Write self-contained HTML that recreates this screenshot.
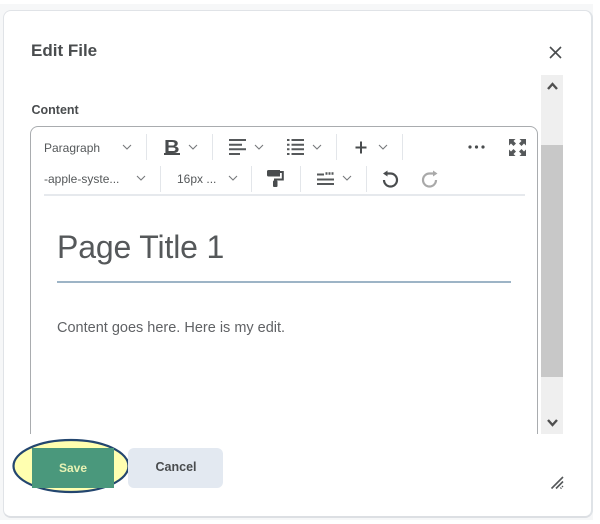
<!DOCTYPE html>
<html><head><meta charset="utf-8">
<style>
html,body{margin:0;padding:0;background:#fff}
#p{position:relative;width:600px;height:524px;overflow:hidden;background:#fff;font-family:"Liberation Sans",sans-serif;color:#494c4e;filter:blur(.3px)}
#p div,#p svg,#p span{position:absolute}
.t{white-space:nowrap;line-height:1}
.sep{width:1px;background:#e3e6ea}
svg{overflow:visible}
</style></head><body>
<div id="p">
<div style="left:0;top:4px;width:593px;height:516px;background:#f6f7f8"></div>
<div style="left:3px;top:10px;width:587px;height:505px;background:#fff;border:1px solid #e0e3e7;border-bottom:2px solid #dcdfe3;border-right:2px solid #dfe3e7;border-radius:8px"></div>

<div class="t" style="left:31px;top:42px;font-size:17px;font-weight:bold">Edit File</div>
<svg style="left:549px;top:46px" width="13" height="13"><path d="M1 1L12 12M12 1L1 12" stroke="#494c4e" stroke-width="1.600" fill="none"/></svg>

<div class="t" style="left:31.500px;top:104px;font-size:12.500px;font-weight:bold">Content</div>

<!-- scrollbar -->
<div style="left:541px;top:75px;width:22px;height:359px;background:#efefef"></div>
<div style="left:541px;top:145px;width:22px;height:232px;background:#c8c8c8"></div>
<svg style="left:547px;top:82px" width="11" height="8"><path d="M1 7L5.500 2L10 7" stroke="#505050" stroke-width="2.400" fill="none"/></svg>
<svg style="left:547px;top:419px" width="11" height="8"><path d="M1 1L5.500 6L10 1" stroke="#505050" stroke-width="2.400" fill="none"/></svg>

<!-- editor -->
<div style="left:30px;top:126px;width:506px;height:307px;border:1px solid #a9acaf;border-bottom:none;border-radius:8px 8px 0 0"></div>
<div style="left:44px;top:194px;width:481px;height:2px;background:#e6e9ed"></div>

<!-- toolbar row 1 -->
<div class="t" style="left:44px;top:142px;font-size:12px;color:#55585a">Paragraph</div>
<svg style="left:122px;top:144px" width="10" height="6"><path d="M1 1L5 5L9 1" stroke="#77797c" stroke-width="1.100" fill="none"/></svg>
<div class="sep" style="left:146px;top:134px;height:26px"></div>
<div class="t" style="left:164px;top:138px;font-size:18px;font-weight:bold;color:#494c4e;transform:scaleX(1.200);transform-origin:left top">B</div>
<div style="left:164px;top:153px;width:16px;height:2px;background:#494c4e"></div>
<svg style="left:188px;top:144px" width="10" height="6"><path d="M1 1L5 5L9 1" stroke="#77797c" stroke-width="1.100" fill="none"/></svg>
<div class="sep" style="left:212px;top:134px;height:26px"></div>
<svg style="left:229px;top:139px" width="18" height="16"><path d="M0 1H17M0 5.700H13M0 10.300H17M0 15H11" stroke="#55585a" stroke-width="2" fill="none"/></svg>
<svg style="left:254px;top:144px" width="10" height="6"><path d="M1 1L5 5L9 1" stroke="#77797c" stroke-width="1.100" fill="none"/></svg>
<svg style="left:287px;top:139px" width="18" height="16"><path d="M4.500 1H17M4.500 5.700H17M4.500 10.300H17M4.500 15H17" stroke="#55585a" stroke-width="2" fill="none"/><path d="M0 1H2.500M0 5.700H2.500M0 10.300H2.500M0 15H2.500" stroke="#55585a" stroke-width="2" fill="none"/></svg>
<svg style="left:312px;top:144px" width="10" height="6"><path d="M1 1L5 5L9 1" stroke="#77797c" stroke-width="1.100" fill="none"/></svg>
<div class="sep" style="left:336px;top:134px;height:26px"></div>
<svg style="left:355px;top:141px" width="13" height="13"><path d="M6 0.500V12.500M0.500 6.500H11.500" stroke="#494c4e" stroke-width="2" fill="none"/></svg>
<svg style="left:378px;top:144px" width="10" height="6"><path d="M1 1L5 5L9 1" stroke="#77797c" stroke-width="1.100" fill="none"/></svg>
<div class="sep" style="left:402px;top:134px;height:26px"></div>
<svg style="left:468px;top:145px" width="18" height="5"><circle cx="2" cy="2" r="1.600" fill="#494c4e"/><circle cx="8.500" cy="2" r="1.600" fill="#494c4e"/><circle cx="15" cy="2" r="1.600" fill="#494c4e"/></svg>
<svg style="left:509px;top:139px" width="17" height="17"><path d="M0 0H6.500L4.500 2L7 4.500L4.500 7L2 4.500L0 6.500ZM17 0V6.500L15 4.500L12.500 7L10 4.500L12.500 2L10.500 0ZM0 17V10.500L2 12.500L4.500 10L7 12.500L4.500 15L6.500 17ZM17 17H10.500L12.500 15L10 12.500L12.500 10L15 12.500L17 10.500Z" fill="#55585a"/></svg>

<!-- toolbar row 2 -->
<div class="t" style="left:44px;top:173px;font-size:12px;color:#55585a">-apple-syste...</div>
<svg style="left:136px;top:175px" width="10" height="6"><path d="M1 1L5 5L9 1" stroke="#77797c" stroke-width="1.100" fill="none"/></svg>
<div class="sep" style="left:160px;top:166px;height:26px"></div>
<div class="t" style="left:177px;top:173px;font-size:12px;color:#55585a">16px ...</div>
<svg style="left:228px;top:175px" width="10" height="6"><path d="M1 1L5 5L9 1" stroke="#77797c" stroke-width="1.100" fill="none"/></svg>
<div class="sep" style="left:251px;top:166px;height:26px"></div>
<svg style="left:267px;top:170px" width="17" height="17"><path d="M0 1.500Q0 0 1.500 0H13V6.500H1.500Q0 6.500 0 5Z" fill="#494c4e"/><path d="M13 2H15.800V9.500H8V12" stroke="#494c4e" stroke-width="2" fill="none"/><rect x="6" y="10.500" width="4.500" height="6.500" rx="1" fill="#494c4e"/></svg>
<div class="sep" style="left:300px;top:166px;height:26px"></div>
<svg style="left:317px;top:172px" width="18" height="13"><path d="M0 2.500H7M0 7.500H17M0 12H17" stroke="#55585a" stroke-width="2" fill="none"/><path d="M8.500 1.500H17" stroke="#55585a" stroke-width="2.500" stroke-dasharray="2 1" fill="none"/></svg>
<svg style="left:342px;top:175px" width="10" height="6"><path d="M1 1L5 5L9 1" stroke="#77797c" stroke-width="1.100" fill="none"/></svg>
<div class="sep" style="left:366px;top:166px;height:26px"></div>
<svg style="left:382px;top:170px" width="17" height="17"><path d="M4 3.500H8.500A6.500 6.500 0 1 1 2 10" stroke="#494c4e" stroke-width="2.200" fill="none"/><path d="M1 3.500L5.500 0.500V6.500Z" fill="#494c4e"/></svg>
<svg style="left:421px;top:170px" width="17" height="17"><path d="M13 3.500H8.500A6.500 6.500 0 1 0 15 10" stroke="#a9a9a9" stroke-width="2.200" fill="none"/><path d="M16.500 3.500L12 0.500V6.500Z" fill="#a9a9a9"/></svg>

<!-- content -->
<div class="t" style="left:57px;top:231px;font-size:32px;color:#55585a;letter-spacing:-.15px">Page Title 1</div>
<div style="left:57px;top:281px;width:454px;height:2px;background:#9db4c6"></div>
<div class="t" style="left:57px;top:321px;font-size:14.500px;color:#606265">Content goes here. Here is my edit.</div>

<!-- footer -->
<svg style="left:12px;top:438px" width="120" height="56"><ellipse cx="59" cy="28" rx="57.500" ry="26" fill="#ffffb0" stroke="#23466f" stroke-width="2.200"/></svg>
<div style="left:32px;top:448px;width:82px;height:40px;background:#4a987c"></div>
<div class="t" style="left:59px;top:462px;font-size:12px;font-weight:bold;color:#e8f2b4">Save</div>
<div style="left:128px;top:448px;width:95px;height:40px;background:#e3e9f1;border-radius:6px"></div>
<div class="t" style="left:155.500px;top:461px;font-size:12.500px;font-weight:bold;color:#494c4e">Cancel</div>
<svg style="left:551px;top:476px" width="13" height="13"><path d="M0.500 12.500L12 1M5 12.500L12 5.500" stroke="#55585a" stroke-width="1.600" fill="none"/><path d="M9.500 12.500L12 10" stroke="#55585a" stroke-width="1.600" stroke-dasharray="1.200 1" fill="none"/></svg>
</div>
</body></html>
